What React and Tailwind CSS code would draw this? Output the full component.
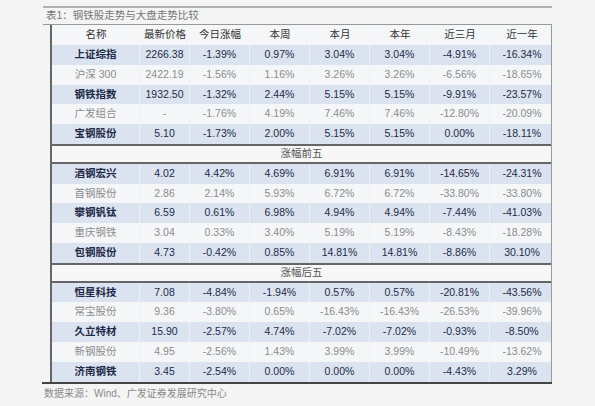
const cols = 'grid grid-cols-[88px_50px_60px_60px_60px_60px_60px_64px]'

const groups = [
  {
    title: null,
    rows: [
      ['上证综指', '2266.38', '-1.39%', '0.97%', '3.04%', '3.04%', '-4.91%', '-16.34%'],
      ['沪深 300', '2422.19', '-1.56%', '1.16%', '3.26%', '3.26%', '-6.56%', '-18.65%'],
      ['钢铁指数', '1932.50', '-1.32%', '2.44%', '5.15%', '5.15%', '-9.91%', '-23.57%'],
      ['广发组合', '-', '-1.76%', '4.19%', '7.46%', '7.46%', '-12.80%', '-20.09%'],
      ['宝钢股份', '5.10', '-1.73%', '2.00%', '5.15%', '5.15%', '0.00%', '-18.11%'],
    ],
  },
  {
    title: '涨幅前五',
    rows: [
      ['酒钢宏兴', '4.02', '4.42%', '4.69%', '6.91%', '6.91%', '-14.65%', '-24.31%'],
      ['首钢股份', '2.86', '2.14%', '5.93%', '6.72%', '6.72%', '-33.80%', '-33.80%'],
      ['攀钢钒钛', '6.59', '0.61%', '6.98%', '4.94%', '4.94%', '-7.44%', '-41.03%'],
      ['重庆钢铁', '3.04', '0.33%', '3.40%', '5.19%', '5.19%', '-8.43%', '-18.28%'],
      ['包钢股份', '4.73', '-0.42%', '0.85%', '14.81%', '14.81%', '-8.86%', '30.10%'],
    ],
  },
  {
    title: '涨幅后五',
    rows: [
      ['恒星科技', '7.08', '-4.84%', '-1.94%', '0.57%', '0.57%', '-20.81%', '-43.56%'],
      ['常宝股份', '9.36', '-3.80%', '0.65%', '-16.43%', '-16.43%', '-26.53%', '-39.96%'],
      ['久立特材', '15.90', '-2.57%', '4.74%', '-7.02%', '-7.02%', '-0.93%', '-8.50%'],
      ['新钢股份', '4.95', '-2.56%', '1.43%', '3.99%', '3.99%', '-10.49%', '-13.62%'],
      ['济南钢铁', '3.45', '-2.54%', '0.00%', '0.00%', '0.00%', '-4.43%', '3.29%'],
    ],
  },
]

const header = ['名称', '最新价格', '今日涨幅', '本周', '本月', '本年', '近三月', '近一年']

function Row({ cells, blue }) {
  return (
    <div
      className={`${cols} h-[19.8px] items-center text-[10.5px] ${
        blue ? 'bg-[#dae3ef] text-[#1f2b48]' : 'bg-[#f5f6f8] text-[#8c8c8c]'
      }`}
    >
      {cells.map((c, i) => (
        <div
          key={i}
          className={`h-full flex items-center justify-center ${i < 7 ? 'border-r border-[#eef1f6]' : ''} ${
            i === 0 && blue ? 'font-bold' : ''
          }`}
        >
          {c}
        </div>
      ))}
    </div>
  )
}

export default function App() {
  return (
    <div
      className="w-[595px] h-[406px] bg-[#f4f4f4] pt-[6px]"
      style={{ fontFamily: '"Liberation Sans", "Noto Sans CJK SC", sans-serif' }}
    >
      <div className="ml-[43px] w-[509px]">
        <div className="border-t-2 border-[#b0b0b0]" />
        <div className="h-[16px] flex items-center pl-[3px] text-[10.5px] text-[#777]">
          表1：钢铁股走势与大盘走势比较
        </div>
        <div className="border-t border-[#999]" />
        <div className="ml-[7px] w-[502px] border-l-2 border-r border-[#666] border-r-[#9a9a9a]">
          <div className={`${cols} h-[20px] items-center bg-[#f5f6f8] text-[10.5px] text-[#333]`}>
            {header.map((h) => (
              <div key={h} className="flex items-center justify-center">
                {h}
              </div>
            ))}
          </div>
          {groups.map((g, gi) => (
            <div key={gi}>
              {g.title && (
                <div className="h-[19.8px] flex items-center justify-center border-y-2 border-[#666] bg-[#f7f7f8] text-[10.5px] text-[#555]">
                  {g.title}
                </div>
              )}
              {g.rows.map((r, ri) => (
                <Row key={ri} cells={r} blue={ri % 2 === 0} />
              ))}
            </div>
          ))}
        </div>
        <div className="-ml-[1px] border-t-2 border-[#444]" />
        <div className="mt-[2px] pl-[1px] text-[10px] text-[#8a8a8a]">数据来源：Wind、广发证券发展研究中心</div>
      </div>
    </div>
  )
}
